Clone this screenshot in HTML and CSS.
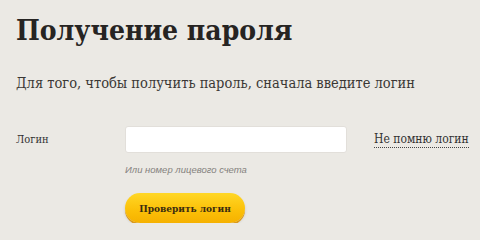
FILE: index.html
```html
<!DOCTYPE html>
<html lang="ru">
<head>
<meta charset="utf-8">
<title>Получение пароля</title>
<link rel="stylesheet" href="styles.css">
</head>
<body>
<main class="page">
  <h1 class="title">Получение пароля</h1>
  <p class="lead">Для того, чтобы получить пароль, сначала введите логин</p>
  <form class="form">
    <div class="row">
      <label class="label" for="login">Логин</label>
      <input class="input" id="login" type="text">
      <a class="link" href="#">Не помню логин</a>
    </div>
    <div class="field-col">
      <div class="hint">Или номер лицевого счета</div>
      <button class="btn" type="button">Проверить логин</button>
    </div>
  </form>
</main>
</body>
</html>
```

FILE: styles.css
```css
html, body {
  margin: 0;
  padding: 0;
}
body {
  background: #ebe9e4;
  font-family: "DejaVu Serif Condensed", "DejaVu Serif", serif;
  font-stretch: condensed;
  color: #2b2927;
}
.page {
  padding: 16px 17px 0 16px;
}
.title {
  margin: 0;
  font-size: 28px;
  line-height: 29px;
  font-weight: bold;
  color: #262422;
}
.lead {
  margin: 28px 0 0 0;
  font-size: 14.5px;
  line-height: 20px;
  color: #3a3734;
}
.form {
  margin-top: 33px;
}
.row {
  display: grid;
  grid-template-columns: 109px 222px auto;
  align-items: center;
}
.label {
  font-size: 11px;
  color: #333;
}
.input {
  box-sizing: border-box;
  width: 222px;
  height: 27px;
  margin: 0;
  border: 1px solid #e2dfda;
  border-radius: 3px;
  background: #fff;
  padding: 0 8px;
  font: inherit;
}
.link {
  justify-self: start;
  margin-left: 27px;
  white-space: nowrap;
  font-size: 12px;
  color: #333;
  text-decoration: none;
  border-bottom: 1px dotted #444;
  padding-bottom: 1px;
}
.field-col {
  margin-left: 109px;
  display: flex;
  flex-direction: column;
  align-items: flex-start;
}
.hint {
  margin-top: 11px;
  font-family: "Liberation Sans", Arial, sans-serif;
  font-stretch: normal;
  font-style: italic;
  font-size: 9.5px;
  line-height: 12px;
  color: #85827e;
}
.btn {
  margin-top: 17px;
  width: 120px;
  height: 30px;
  border: 0;
  border-radius: 15px;
  background: linear-gradient(#ffd726, #fbbf07 60%, #f5b100);
  box-shadow: 0 2px 0 #dc9a1a, 0 2px 3px rgba(0,0,0,0.15);
  font-family: "DejaVu Serif Condensed", "DejaVu Serif", serif;
  font-stretch: condensed;
  font-weight: bold;
  font-size: 10px;
  color: #3a2c10;
  padding: 0;
  cursor: pointer;
}
```
